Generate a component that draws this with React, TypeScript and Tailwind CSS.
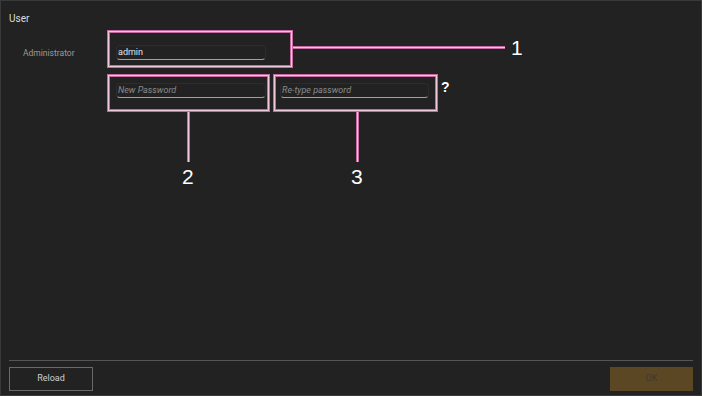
import React from "react";

const box =
  "absolute border border-[#c46a9e] shadow-[inset_0_0_0_1px_#f0c8dc,inset_0_0_0_2px_#c46a9e]";
const hLine =
  "absolute bg-[#f0c8dc] border-y border-[#c46a9e]";
const vLine =
  "absolute bg-[#f0c8dc] border-x border-[#c46a9e]";
const num =
  "absolute text-[21px] leading-none text-white font-['Liberation_Sans',Arial,sans-serif]";

function Field({ value, placeholder, w }: { value?: string; placeholder?: string; w: string }) {
  return (
    <div
      className={`${w} h-[15px] rounded-[4px] border border-[#2c2c2c] border-b-[#a0a0a0] px-[1px] flex items-center text-[9px] leading-none`}
    >
      {value ? (
        <span className="text-[#e4e4e4]">{value}</span>
      ) : (
        <span className="italic text-[#8a8a8a]">{placeholder}</span>
      )}
    </div>
  );
}

export default function App() {
  return (
    <div className="relative w-[702px] h-[396px] overflow-hidden font-['Roboto','Noto_Sans',sans-serif]">
      <div className="w-full h-full bg-[#222222] border border-[#3a3a3a] flex flex-col">
        <div className="pl-[8px] pt-[13px] text-[10px] leading-none text-[#dcdcdc]">User</div>

        <div className="flex items-end mt-[21px]">
          <div className="w-[115px] pl-[22px] pb-[3px] text-[8.5px] leading-none text-[#9a9a9a]">
            Administrator
          </div>
          <Field value="admin" w="w-[150px]" />
        </div>

        <div className="flex items-end mt-[23px] pl-[115px] gap-[14px]">
          <Field placeholder="New Password" w="w-[150px]" />
          <Field placeholder="Re-type password" w="w-[149px]" />
        </div>

        <div className="flex-1" />

        <div className="mx-[8px] border-t border-[#555] pt-[6px] pb-[4px] flex justify-between">
          <button className="w-[84px] h-[24px] border border-[#6a6a6a] text-[9px] text-[#cfcfcf]">
            Reload
          </button>
          <button className="w-[83px] h-[24px] bg-[#5b4723] text-[9px] text-[#3f3a2e]">OK</button>
        </div>
      </div>

      {/* annotations */}
      <div className={`${box} left-[107px] top-[30px] w-[186px] h-[38px]`} />
      <div className={`${box} left-[107px] top-[74px] w-[163px] h-[38px]`} />
      <div className={`${box} left-[273px] top-[74px] w-[165px] h-[38px]`} />

      <div className={`${hLine} left-[293px] top-[46px] w-[212px] h-[3px]`} />
      <div className={`${num} left-[511px] top-[37px]`}>1</div>

      <div className={`${vLine} left-[187px] top-[112px] w-[3px] h-[50px]`} />
      <div className={`${num} left-[182px] top-[166px]`}>2</div>

      <div className={`${vLine} left-[356px] top-[112px] w-[3px] h-[50px]`} />
      <div className={`${num} left-[351px] top-[166px]`}>3</div>

      <div className="absolute left-[441px] top-[80px] text-[14px] leading-none font-bold text-white font-['Liberation_Sans',Arial,sans-serif]">
        ?
      </div>
    </div>
  );
}
